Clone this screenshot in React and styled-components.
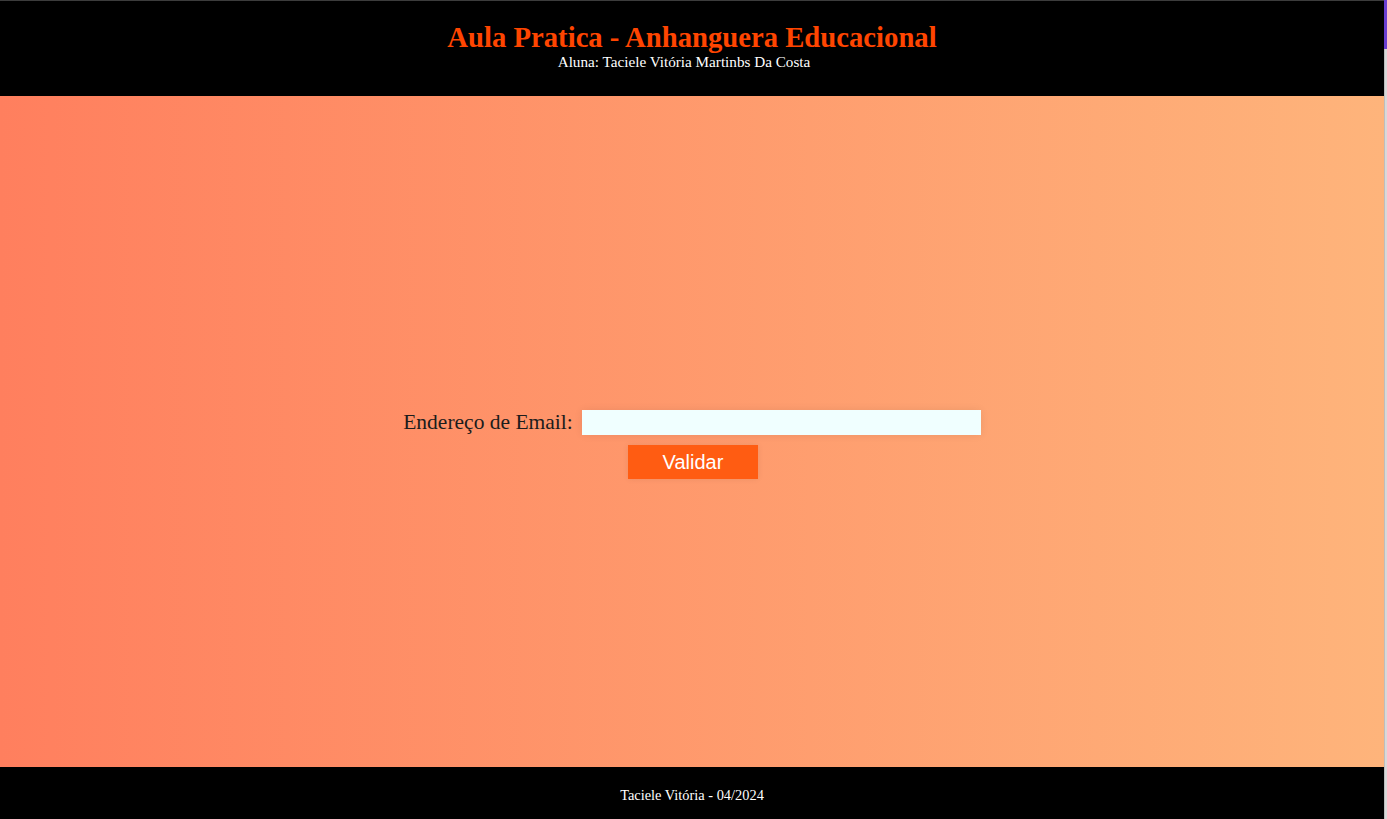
import React from 'react';
import styled, { createGlobalStyle } from 'styled-components';

const GlobalStyle = createGlobalStyle`
  body {
    margin: 0;
    font-family: 'Liberation Serif', 'Times New Roman', serif;
  }
`;

const Page = styled.div`
  display: flex;
  flex-direction: column;
  height: 819px;
  margin-right: 3px;
`;

// thin scrollbar on the right edge of the window
const ScrollTrack = styled.div`
  position: fixed;
  top: 0;
  right: 0;
  width: 3px;
  height: 100%;
  background: #d9d9d9;
  box-shadow: inset 1px 0 0 #bdbdbd;
`;

const ScrollThumb = styled.div`
  height: 49px;
  background: #6a3fd2;
`;

const Header = styled.header`
  background: #000;
  border-top: 1px solid #3c3c3c;
  height: 96px;
  box-sizing: border-box;
  display: flex;
  flex-direction: column;
  align-items: center;
  padding-top: 20px;
`;

const Title = styled.h1`
  margin: 0;
  color: #ff4500;
  font-size: 28.7px;
  font-weight: bold;
  line-height: 33px;
`;

const Subtitle = styled.p`
  margin: 0;
  padding-right: 16px;
  color: #fff;
  font-size: 15.2px;
  line-height: 16px;
`;

const Main = styled.main`
  flex: 1;
  background: linear-gradient(to right, #ff7f5e, #feb47b);
  display: flex;
  flex-direction: column;
  align-items: center;
  justify-content: center;
  gap: 10px;
  padding-top: 26px;
  box-sizing: border-box;
`;

const Row = styled.div`
  display: flex;
  align-items: center;
  gap: 9px;
`;

const Label = styled.label`
  font-size: 21.5px;
  color: #1c1c1c;
`;

const Input = styled.input`
  width: 399px;
  height: 25px;
  box-sizing: border-box;
  border: none;
  background: #f0ffff;
  box-shadow: 0 0 8px rgba(0, 0, 0, 0.08);
  outline: none;
`;

const Button = styled.button`
  width: 130px;
  height: 34px;
  margin-left: 2px;
  border: none;
  background: #ff5c12;
  color: #fff;
  font-family: 'Liberation Sans', Arial, sans-serif;
  font-size: 20px;
  box-shadow: 0 0 6px rgba(0, 0, 0, 0.08);
  cursor: pointer;
`;

const Footer = styled.footer`
  background: #000;
  height: 52px;
  box-sizing: border-box;
  padding-top: 4px;
  display: flex;
  align-items: center;
  justify-content: center;
  color: #fff;
  font-size: 14.4px;
`;

export default function App() {
  return (
    <Page>
      <GlobalStyle />
      <Header>
        <Title>Aula Pratica - Anhanguera Educacional</Title>
        <Subtitle>Aluna: Taciele Vitória Martinbs Da Costa</Subtitle>
      </Header>
      <Main>
        <Row>
          <Label htmlFor='email'>Endereço de Email:</Label>
          <Input id='email' type='email' />
        </Row>
        <Button>Validar</Button>
      </Main>
      <Footer>Taciele Vitória - 04/2024</Footer>
      <ScrollTrack>
        <ScrollThumb />
      </ScrollTrack>
    </Page>
  );
}
